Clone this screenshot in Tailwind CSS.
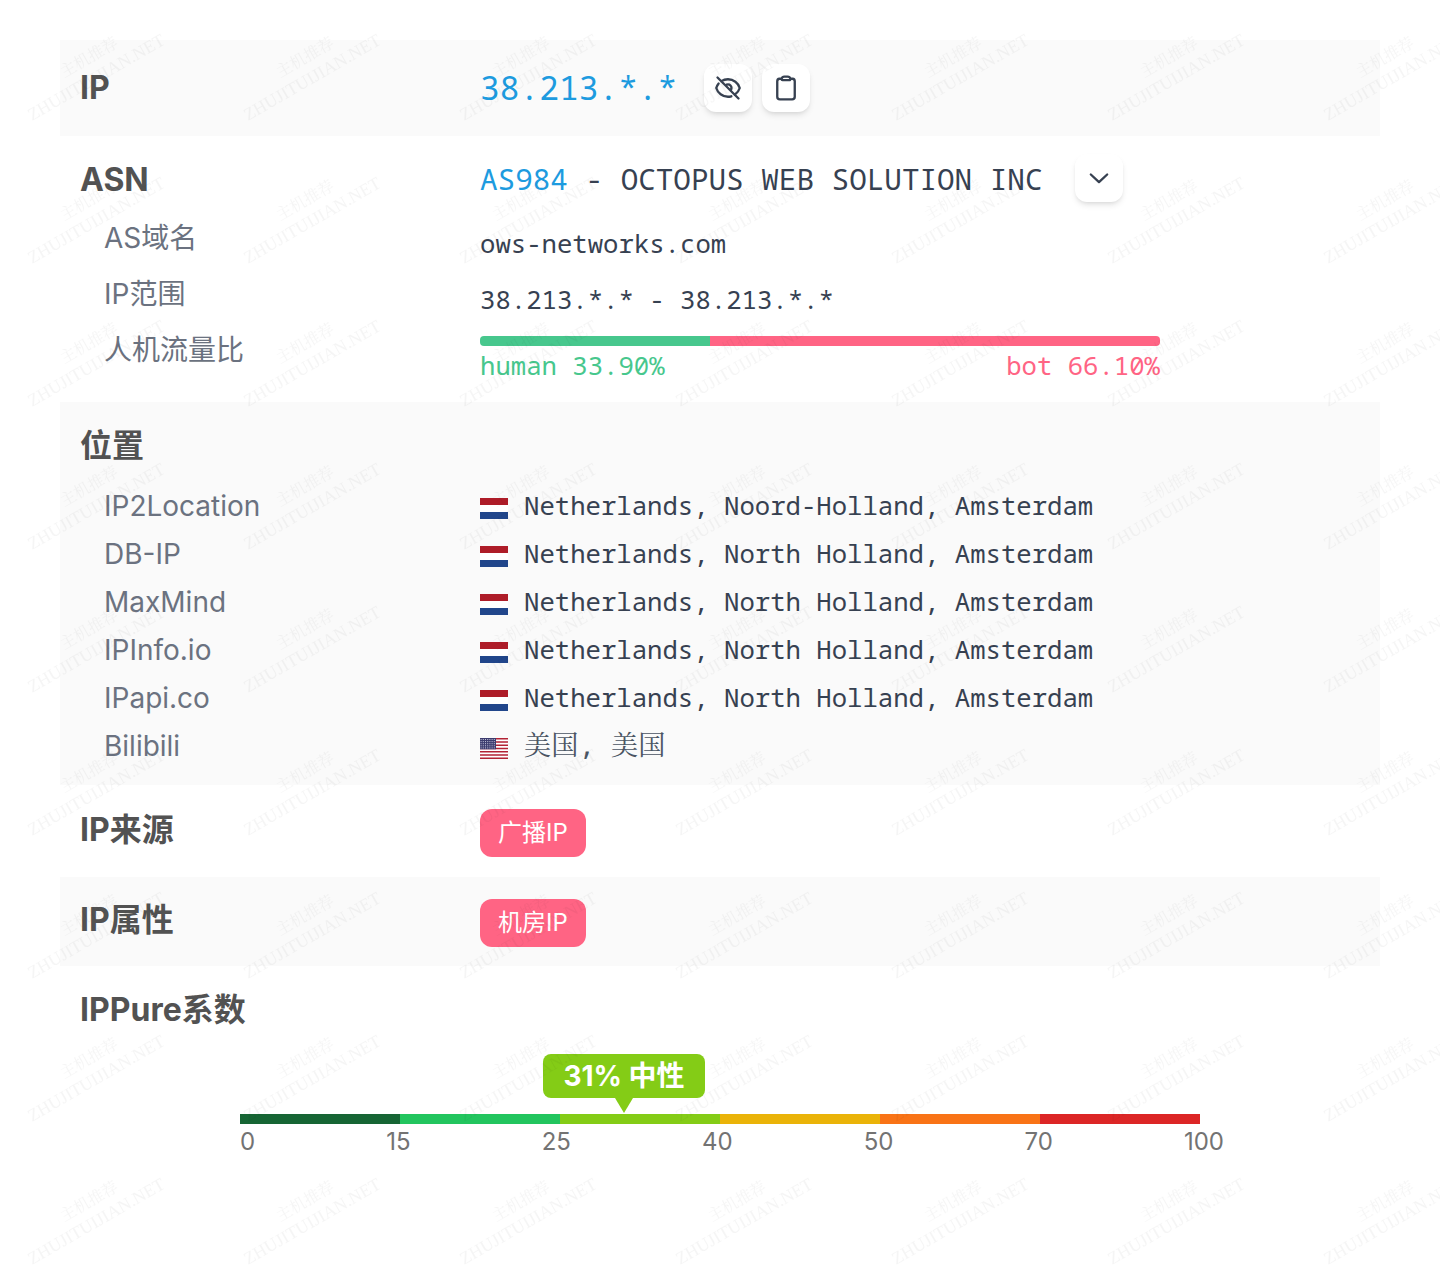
<!DOCTYPE html>
<html lang="zh-CN">
<head>
<meta charset="UTF-8">
<meta name="viewport" content="width=device-width, initial-scale=1.0">
<title>IP</title>
<script src="https://cdn.jsdelivr.net/npm/@tailwindcss/browser@4"></script>
</head>
<body class="bg-white font-['Inter','Noto_Sans_CJK_SC',sans-serif]">
<div class="relative h-[1288px] overflow-hidden px-[60px] pt-[40px]">

  <!-- IP -->
  <div class="flex h-[96px] bg-[#fafafa] px-5">
    <div class="w-[400px] pt-[26px] text-[32px] leading-[44px] font-bold text-[#525252]">IP</div>
    <div class="flex items-center gap-[10px]">
      <span class="mr-[17px] font-['Noto_Sans_Mono','DejaVu_Sans_Mono',monospace] text-[32.9px] text-[#1d9bdf]">38.213.*.*</span>
      <button class="flex h-12 w-12 items-center justify-center rounded-xl bg-white shadow-md shadow-black/10 text-[#374151]">
        <svg class="h-7 w-7" fill="none" viewBox="0 0 24 24" stroke="currentColor" stroke-width="2" stroke-linecap="round" stroke-linejoin="round"><path d="M3.98 8.223A10.477 10.477 0 0 0 1.934 12C3.226 16.338 7.244 19.5 12 19.5c.993 0 1.953-.138 2.863-.395M6.228 6.228A10.45 10.45 0 0 1 12 4.5c4.756 0 8.773 3.162 10.065 7.498a10.522 10.522 0 0 1-4.293 5.774M6.228 6.228 3 3m3.228 3.228 3.65 3.65m7.894 7.894L21 21m-3.228-3.228-3.65-3.65m0 0a3 3 0 1 0-4.243-4.243m4.242 4.242L9.88 9.88"/></svg>
      </button>
      <button class="flex h-12 w-12 items-center justify-center rounded-xl bg-white shadow-md shadow-black/10 text-[#374151]">
        <svg class="h-7 w-7" fill="none" viewBox="0 0 24 24" stroke="currentColor" stroke-width="2" stroke-linecap="round" stroke-linejoin="round"><path d="M15.666 3.888A2.25 2.25 0 0 0 13.5 2.25h-3c-1.03 0-1.9.693-2.166 1.638m7.332 0c.055.194.084.4.084.612v0a.75.75 0 0 1-.75.75H9a.75.75 0 0 1-.75-.75v0c0-.212.03-.418.084-.612m7.332 0c.646.049 1.288.11 1.927.184 1.1.128 1.907 1.077 1.907 2.185V19.5a2.25 2.25 0 0 1-2.25 2.25H6.75A2.25 2.25 0 0 1 4.5 19.5V6.257c0-1.108.806-2.057 1.907-2.185a48.208 48.208 0 0 1 1.927-.184"/></svg>
      </button>
    </div>
  </div>

  <!-- ASN -->
  <div class="h-[266px] px-5">
    <div class="flex h-[74px] pt-[21px]">
      <div class="mt-[1px] w-[400px] text-[32px] leading-[44px] font-bold text-[#525252]">ASN</div>
      <div class="flex h-[46px] items-center font-['Noto_Sans_Mono','DejaVu_Sans_Mono',monospace] text-[29.3px] text-[#374151]">
        <span class="text-[#1d9bdf]">AS984</span><span class="whitespace-pre"> - OCTOPUS WEB SOLUTION INC</span>
        <button class="-mt-[4px] ml-[32px] flex h-12 w-12 items-center justify-center rounded-xl bg-white shadow-md shadow-black/10 text-[#374151]">
          <svg class="h-7 w-7" fill="none" viewBox="0 0 24 24" stroke="currentColor" stroke-width="2" stroke-linecap="round" stroke-linejoin="round"><path d="M5 9l7 6.5L19 9"/></svg>
        </button>
      </div>
    </div>
    <div class="flex h-[56px] items-center">
      <div class="w-[400px] pl-[24px] text-[28px] text-[#6b7280]">AS域名</div>
      <div class="pt-[12px] font-['Noto_Sans_Mono','DejaVu_Sans_Mono',monospace] text-[25.65px] text-[#374151]">ows-networks.com</div>
    </div>
    <div class="flex h-[56px] items-center">
      <div class="w-[400px] pl-[24px] text-[28px] text-[#6b7280]">IP范围</div>
      <div class="pt-[12px] font-['Noto_Sans_Mono','DejaVu_Sans_Mono',monospace] text-[25.65px] text-[#374151]">38.213.*.* - 38.213.*.*</div>
    </div>
    <div class="flex">
      <div class="w-[400px] pl-[24px] text-[28px] leading-[56px] text-[#6b7280]">人机流量比</div>
      <div class="w-[680px] pt-[14px]">
        <div class="flex h-[10px] overflow-hidden rounded-[4px]">
          <div class="h-full w-[230px] bg-[#47c78d]"></div>
          <div class="h-full w-[450px] bg-[#ff6484]"></div>
        </div>
        <div class="flex justify-between font-['Noto_Sans_Mono','DejaVu_Sans_Mono',monospace] text-[25.65px] leading-[40px]">
          <span class="text-[#47c78d]">human 33.90%</span>
          <span class="text-[#ff6484]">bot 66.10%</span>
        </div>
      </div>
    </div>
  </div>

  <!-- 位置 -->
  <div class="h-[383px] bg-[#fafafa] px-5 pt-[22px]">
    <div class="mb-[14px] text-[32px] leading-[44px] font-bold text-[#525252]">位置</div>
    <div class="flex h-[48px] items-center">
      <div class="w-[400px] pl-[24px] text-[28px] text-[#6b7280]">IP2Location</div>
      <svg class="mt-[4px] mr-[16px] h-[21px] w-[28px]" viewBox="0 0 28 21"><rect width="28" height="7" fill="#ae1c28"/><rect y="7" width="28" height="7" fill="#fff"/><rect y="14" width="28" height="7" fill="#21468b"/></svg>
      <span class="font-['Noto_Sans_Mono','DejaVu_Sans_Mono',monospace] text-[25.65px] text-[#374151]">Netherlands, Noord-Holland, Amsterdam</span>
    </div>
    <div class="flex h-[48px] items-center">
      <div class="w-[400px] pl-[24px] text-[28px] text-[#6b7280]">DB-IP</div>
      <svg class="mt-[4px] mr-[16px] h-[21px] w-[28px]" viewBox="0 0 28 21"><rect width="28" height="7" fill="#ae1c28"/><rect y="7" width="28" height="7" fill="#fff"/><rect y="14" width="28" height="7" fill="#21468b"/></svg>
      <span class="font-['Noto_Sans_Mono','DejaVu_Sans_Mono',monospace] text-[25.65px] text-[#374151]">Netherlands, North Holland, Amsterdam</span>
    </div>
    <div class="flex h-[48px] items-center">
      <div class="w-[400px] pl-[24px] text-[28px] text-[#6b7280]">MaxMind</div>
      <svg class="mt-[4px] mr-[16px] h-[21px] w-[28px]" viewBox="0 0 28 21"><rect width="28" height="7" fill="#ae1c28"/><rect y="7" width="28" height="7" fill="#fff"/><rect y="14" width="28" height="7" fill="#21468b"/></svg>
      <span class="font-['Noto_Sans_Mono','DejaVu_Sans_Mono',monospace] text-[25.65px] text-[#374151]">Netherlands, North Holland, Amsterdam</span>
    </div>
    <div class="flex h-[48px] items-center">
      <div class="w-[400px] pl-[24px] text-[28px] text-[#6b7280]">IPInfo.io</div>
      <svg class="mt-[4px] mr-[16px] h-[21px] w-[28px]" viewBox="0 0 28 21"><rect width="28" height="7" fill="#ae1c28"/><rect y="7" width="28" height="7" fill="#fff"/><rect y="14" width="28" height="7" fill="#21468b"/></svg>
      <span class="font-['Noto_Sans_Mono','DejaVu_Sans_Mono',monospace] text-[25.65px] text-[#374151]">Netherlands, North Holland, Amsterdam</span>
    </div>
    <div class="flex h-[48px] items-center">
      <div class="w-[400px] pl-[24px] text-[28px] text-[#6b7280]">IPapi.co</div>
      <svg class="mt-[4px] mr-[16px] h-[21px] w-[28px]" viewBox="0 0 28 21"><rect width="28" height="7" fill="#ae1c28"/><rect y="7" width="28" height="7" fill="#fff"/><rect y="14" width="28" height="7" fill="#21468b"/></svg>
      <span class="font-['Noto_Sans_Mono','DejaVu_Sans_Mono',monospace] text-[25.65px] text-[#374151]">Netherlands, North Holland, Amsterdam</span>
    </div>
    <div class="flex h-[48px] items-center">
      <div class="w-[400px] pl-[24px] text-[28px] text-[#6b7280]">Bilibili</div>
      <svg class="mt-[4px] mr-[16px] h-[21px] w-[28px]" viewBox="0 0 28 21">
        <rect width="28" height="21" fill="#fff"/>
        <path fill="#b22234" d="M0 0h28v1.6H0zM0 3.2h28v1.6H0zM0 6.5h28v1.6H0zM0 9.7h28v1.6H0zM0 12.9h28v1.6H0zM0 16.2h28v1.6H0zM0 19.4h28V21H0z"/>
        <rect width="16" height="11.3" fill="#3c3b6e"/>
        <path stroke="#c5c7dd" stroke-width="1" stroke-dasharray="1 1.2" d="M.6 1.5h15M.6 3.6h15M.6 5.7h15M.6 7.8h15M.6 9.9h15"/>
      </svg>
      <span class="-mt-[2px] font-['Noto_Sans_Mono','DejaVu_Sans_Mono','Noto_Serif_CJK_SC','Noto_Sans_CJK_SC',serif] text-[27.2px] text-[#4b5563]">美国, 美国</span>
    </div>
  </div>

  <!-- IP来源 -->
  <div class="flex h-[92px] px-5">
    <div class="w-[400px] pt-[23px] text-[32px] leading-[44px] font-bold text-[#525252]">IP来源</div>
    <div class="pt-[24px]"><span class="flex h-[48px] w-[106px] items-center justify-center rounded-xl bg-[#ff6484] text-[24px] text-white">广播IP</span></div>
  </div>

  <!-- IP属性 -->
  <div class="flex h-[89px] bg-[#fafafa] px-5">
    <div class="w-[400px] pt-[21px] text-[32px] leading-[44px] font-bold text-[#525252]">IP属性</div>
    <div class="pt-[22px]"><span class="flex h-[48px] w-[106px] items-center justify-center rounded-xl bg-[#ff6484] text-[24px] text-white">机房IP</span></div>
  </div>

  <!-- IPPure系数 -->
  <div class="px-5 pt-[22px]">
    <div class="text-[32px] leading-[44px] font-bold text-[#525252]">IPPure系数</div>
    <div class="relative mt-[82px] ml-[160px] w-[984px]">
      <div class="flex h-[10px] w-[960px]">
        <div class="w-[160px] bg-[#166534]"></div>
        <div class="w-[160px] bg-[#22c55e]"></div>
        <div class="w-[160px] bg-[#84cc16]"></div>
        <div class="w-[160px] bg-[#eab308]"></div>
        <div class="w-[160px] bg-[#f97316]"></div>
        <div class="w-[160px] bg-[#dc2626]"></div>
      </div>
      <div class="flex justify-between text-[24px] leading-[36px] text-[#737373]">
        <span>0</span><span>15</span><span>25</span><span>40</span><span>50</span><span>70</span><span>100</span>
      </div>
      <div class="absolute bottom-[62px] left-[303px] flex h-[44px] w-[162px] items-center justify-center rounded-lg bg-[#84cc16] text-[28px] font-bold text-white">
        31% 中性
        <div class="absolute top-full left-[72px] h-0 w-0 border-x-[9px] border-t-[15px] border-x-transparent border-t-[#84cc16]"></div>
      </div>
    </div>
  </div>

  <!-- Watermark -->
  <svg class="pointer-events-none absolute inset-0 h-full w-full" xmlns="http://www.w3.org/2000/svg">
    <defs>
      <pattern id="wm" width="216" height="143" patternUnits="userSpaceOnUse">
        <g class="font-['Liberation_Serif','Noto_Serif_CJK_SC','Noto_Sans_CJK_SC',serif]" fill="#000" fill-opacity="0.04">
          <text transform="translate(64 78) rotate(-30)" font-size="16">主机推荐</text>
          <text transform="translate(32 121) rotate(-30)" font-size="17.6">ZHUJITUIJIAN.NET</text>
        </g>
      </pattern>
    </defs>
    <rect width="100%" height="100%" fill="url(#wm)"/>
  </svg>
</div>
</body>
</html>
